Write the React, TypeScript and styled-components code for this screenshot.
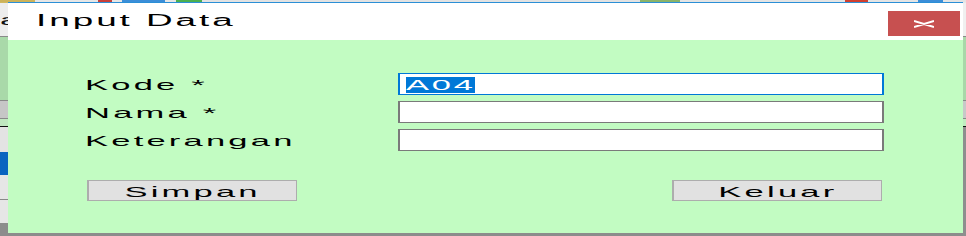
import React from "react";
import styled, { createGlobalStyle } from "styled-components";

const Global = createGlobalStyle`
  html, body {
    margin: 0;
    padding: 0;
    background: #e6e6e6;
    overflow: hidden;
  }
  body {
    font-family: "Liberation Sans", Arial, sans-serif;
  }
`;

const Desktop = styled.div`
  width: 966px;
  height: 236px;
  display: flex;
  flex-direction: column;
  overflow: hidden;
`;

const TopStrip = styled.div`
  height: 2px;
  display: flex;
  flex-shrink: 0;
`;

const Piece = styled.div<{ $w: number; $c: string }>`
  width: ${(p) => p.$w}px;
  background: ${(p) => p.$c};
  flex-shrink: 0;
`;

const Middle = styled.div`
  flex: 1;
  display: flex;
  min-height: 0;
`;

const SideStrip = styled.div<{ $w: number }>`
  width: ${(p) => p.$w}px;
  display: flex;
  flex-direction: column;
  flex-shrink: 0;
  overflow: hidden;
`;

const Segment = styled.div<{ $h: number; $c: string }>`
  height: ${(p) => p.$h}px;
  background: ${(p) => p.$c};
  flex-shrink: 0;
  display: flex;
  justify-content: flex-end;
  align-items: center;
  font-size: 15px;
  color: #111;
  overflow: hidden;
  &:last-child {
    flex: 1;
  }
`;

const Window = styled.div`
  width: 955px;
  display: flex;
  flex-direction: column;
  border-top: 1px solid #2b8fd6;
  border-bottom: 3px solid #8c8c8c;
`;

const TitleBar = styled.div`
  height: 37px;
  flex-shrink: 0;
  background: #ffffff;
  display: flex;
  justify-content: space-between;
  align-items: flex-start;
  padding: 0 3px 0 28px;
`;

const Title = styled.div`
  padding-top: 10px;
  font-size: 16px;
  line-height: 16px;
  color: #000;
`;

const Stretch = styled.span<{ $origin?: string; $ls?: number }>`
  display: inline-block;
  white-space: nowrap;
  letter-spacing: ${(p) => p.$ls ?? 1.4}px;
  transform: scaleX(2.3);
  transform-origin: ${(p) => p.$origin ?? "left center"};
`;

const CloseButton = styled.div`
  margin-top: 8px;
  width: 72px;
  height: 25px;
  background: #c75050;
  display: flex;
  align-items: center;
  justify-content: center;
`;

const Body = styled.div`
  flex: 1;
  background: #c2fcc2;
  padding: 33px 0 0 77px;
  display: flex;
  flex-direction: column;
`;

const FormGrid = styled.div`
  display: grid;
  grid-template-columns: 313px 486px;
  row-gap: 6px;
  align-items: center;
`;

const Label = styled.div`
  font-size: 15px;
  line-height: 15px;
  color: #000;
`;

const InputBox = styled.div<{ $focused?: boolean }>`
  box-sizing: border-box;
  height: 22px;
  background: #ffffff;
  border-style: solid;
  border-color: ${(p) => (p.$focused ? "#0078d7" : "#7a7a7a")};
  border-width: 1px 2px;
  padding: 2px 0 0 6px;
`;

const Selected = styled.span`
  display: inline-block;
  background: #0078d7;
  color: #ffffff;
  font-size: 15px;
  line-height: 16px;
  height: 16px;
  letter-spacing: 1.2px;
  transform: scaleX(2.3);
  transform-origin: left center;
`;

const ButtonRow = styled.div`
  width: 797px;
  margin-top: 29px;
  padding-left: 2px;
  box-sizing: border-box;
  display: flex;
  justify-content: space-between;
`;

const Button = styled.div`
  box-sizing: border-box;
  width: 210px;
  height: 21px;
  background: #e1e1e1;
  border: 1px solid #adadad;
  border-left-width: 2px;
  display: flex;
  justify-content: center;
  align-items: center;
  padding-top: 2px;
  font-size: 15px;
  line-height: 15px;
  color: #000;
`;

const topPieces: [number, string][] = [
  [35, "#cdb35a"],
  [63, "#e6e6e6"],
  [14, "#c8403a"],
  [10, "#e6e6e6"],
  [43, "#3c8ed8"],
  [11, "#e6e6e6"],
  [26, "#4caf50"],
  [438, "#e2e2e2"],
  [40, "#8ab36a"],
  [165, "#e4e4e4"],
  [23, "#d04030"],
  [50, "#e4e4e4"],
  [25, "#3c8ed8"],
  [23, "#e4e4e4"],
];

const leftSegs: [number, string][] = [
  [1, "#d0b860"],
  [33, "#ededed"],
  [1, "#8a8a8a"],
  [63, "#a9d9a9"],
  [1, "#888888"],
  [17, "#c6c6c6"],
  [1, "#888888"],
  [7, "#c0e8c0"],
  [1, "#111111"],
  [25, "#e3e3e3"],
  [23, "#0a64c0"],
  [24, "#e6e6e6"],
  [1, "#888888"],
  [23, "#e6e6e6"],
  [13, "#8c8c8c"],
];

const rightSegs: [number, string][] = [
  [1, "#e8e8e8"],
  [33, "#f0f0f0"],
  [1, "#8a8a8a"],
  [63, "#a8d8a8"],
  [1, "#888888"],
  [17, "#c8c8c8"],
  [1, "#888888"],
  [7, "#c0ecc0"],
  [1, "#111111"],
  [109, "#8e8e8e"],
];

export default function App() {
  return (
    <>
      <Global />
      <Desktop>
        <TopStrip>
          {topPieces.map(([w, c], i) => (
            <Piece key={i} $w={w} $c={c} />
          ))}
        </TopStrip>
        <Middle>
          <SideStrip $w={8}>
            {leftSegs.map(([h, c], i) => (
              <Segment key={i} $h={h} $c={c}>
                {i === 1 ? <Stretch $ls={0}>a</Stretch> : null}
              </Segment>
            ))}
          </SideStrip>
          <Window>
            <TitleBar>
              <Title>
                <Stretch $ls={1.3}>Input Data</Stretch>
              </Title>
              <CloseButton>
                <svg width="20" height="8" viewBox="0 0 20 8">
                  <path
                    d="M0 1 L10 4 L20 1 M0 7 L10 4 L20 7"
                    stroke="#ffffff"
                    strokeWidth="2"
                    fill="none"
                  />
                </svg>
              </CloseButton>
            </TitleBar>
            <Body>
              <FormGrid>
                <Label>
                  <Stretch>Kode *</Stretch>
                </Label>
                <InputBox $focused>
                  <Selected>A04</Selected>
                </InputBox>
                <Label>
                  <Stretch>Nama *</Stretch>
                </Label>
                <InputBox />
                <Label>
                  <Stretch>Keterangan</Stretch>
                </Label>
                <InputBox />
              </FormGrid>
              <ButtonRow>
                <Button>
                  <Stretch $origin="center">Simpan</Stretch>
                </Button>
                <Button>
                  <Stretch $origin="center">Keluar</Stretch>
                </Button>
              </ButtonRow>
            </Body>
          </Window>
          <SideStrip $w={3}>
            {rightSegs.map(([h, c], i) => (
              <Segment key={i} $h={h} $c={c} />
            ))}
          </SideStrip>
        </Middle>
      </Desktop>
    </>
  );
}
